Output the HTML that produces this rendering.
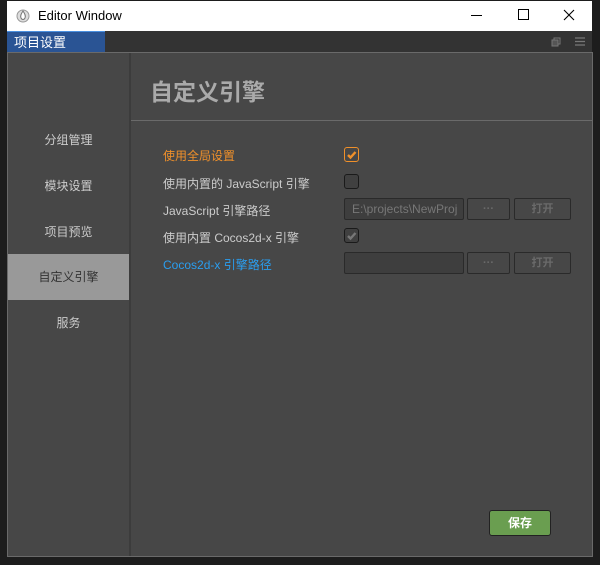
<!DOCTYPE html>
<html><head><meta charset="utf-8"><style>
*{margin:0;padding:0;box-sizing:border-box}
body{width:600px;height:565px;background:#1d1d1d;position:relative;overflow:hidden;font-family:"Liberation Sans","Noto Sans CJK SC",sans-serif;font-size:12px}
.abs{position:absolute}
.title{left:7px;top:1px;width:585px;height:30px;background:#fff}
.tabbar{left:7px;top:31px;width:585px;height:22px;background:#333}
.tab{left:7px;top:31px;width:98px;height:22px;background:#2a5494;border-top:1px solid #4a90e0;color:#fff;font-size:13px;line-height:22px;padding-left:7px}
.panel{left:7px;top:52px;width:586px;height:505px;background:#474747;border:1px solid #6a6a6a}
.side{left:8px;top:53px;width:121px;height:503px;background:#474747}
.sep{left:129px;top:53px;width:2px;height:503px;background:#3c3c3c}
.item{left:8px;width:121px;height:46px;line-height:46px;text-align:center;color:#ccc;font-size:12px}
.lbl{left:163px;font-size:12px;color:#ccc}
.cb{left:344px;width:15px;height:15px;border:1px solid #1a1a1a;border-radius:3px;background:#474747}
.inp{left:344px;width:120px;height:22px;background:#3e3e3e;border:1px solid #2a2a2a;border-radius:2px;color:#777;font-size:12px;line-height:20px;padding-left:7px;overflow:hidden;white-space:nowrap}
.btn{width:43px;height:22px;border:1px solid #2a2a2a;border-radius:2px;background:#474747;color:#6a6a6a;text-align:center;line-height:20px;font-weight:bold;font-size:11px}
</style></head><body>
<div class="abs title"></div>
<svg class="abs" style="left:16px;top:8px" width="14" height="15" viewBox="0 0 14 15"><circle cx="7" cy="8" r="6" fill="#ddd" stroke="#999"/><path d="M7 3 C5 6 4 8 5 10 C6 12 8 12 9 10 C10 8 9 6 7 3Z" fill="#fff" stroke="#777"/></svg>
<div class="abs" style="left:38px;top:8px;font-size:13px;color:#000;font-family:'Liberation Sans',sans-serif">Editor Window</div>
<div class="abs" style="left:471px;top:15px;width:11px;height:1px;background:#000"></div>
<div class="abs" style="left:518px;top:9px;width:11px;height:11px;border:1px solid #000"></div>
<svg class="abs" style="left:563px;top:9px" width="12" height="12"><path d="M1 1L11 11M11 1L1 11" stroke="#000" stroke-width="1.1"/></svg>
<div class="abs tabbar"></div>
<div class="abs tab">项目设置</div>
<svg class="abs" style="left:551px;top:37px" width="10" height="10"><rect x="3" y="1" width="6" height="6" fill="none" stroke="#777"/><rect x="1" y="3" width="6" height="6" fill="#555" stroke="#777"/></svg>
<svg class="abs" style="left:575px;top:37px" width="10" height="9"><path d="M0 1H10M0 4.5H10M0 8H10" stroke="#777" stroke-width="1.2"/></svg>
<div class="abs panel"></div>
<div class="abs side"></div>
<div class="abs sep"></div>
<div class="abs item" style="top:117px">分组管理</div>
<div class="abs item" style="top:163px">模块设置</div>
<div class="abs item" style="top:209px">项目预览</div>
<div class="abs item" style="top:254px;background:#999;color:#333">自定义引擎</div>
<div class="abs item" style="top:300px">服务</div>
<div class="abs" style="left:150px;top:73px;font-size:23px;font-weight:bold;color:#aaa">自定义引擎</div>
<div class="abs" style="left:131px;top:120px;width:461px;height:1px;background:#6a6a6a"></div>
<div class="abs lbl" style="top:147px;color:#f0902a">使用全局设置</div>
<div class="abs cb" style="top:147px;border-color:#f0902a"></div>
<svg class="abs" style="left:346px;top:149px" width="11" height="11"><path d="M2 6L4.5 8.5L9.5 3" stroke="#f0902a" stroke-width="2.4" fill="none"/></svg>
<div class="abs lbl" style="top:175px">使用内置的 JavaScript 引擎</div>
<div class="abs cb" style="top:174px;background:#404040"></div>
<div class="abs lbl" style="top:202px">JavaScript 引擎路径</div>
<div class="abs inp" style="top:198px">E:\projects\NewProj</div>
<div class="abs btn" style="left:467px;top:198px">···</div>
<div class="abs btn" style="left:514px;top:198px;width:57px">打开</div>
<div class="abs lbl" style="top:229px">使用内置 Cocos2d-x 引擎</div>
<div class="abs cb" style="top:228px;background:#404040"></div>
<svg class="abs" style="left:346px;top:230px" width="11" height="11"><path d="M2 6L4.5 8.5L9.5 3" stroke="#777" stroke-width="2.4" fill="none"/></svg>
<div class="abs lbl" style="top:256px;color:#2a9ef0">Cocos2d-x 引擎路径</div>
<div class="abs inp" style="top:252px"></div>
<div class="abs btn" style="left:467px;top:252px">···</div>
<div class="abs btn" style="left:514px;top:252px;width:57px">打开</div>
<div class="abs" style="left:489px;top:510px;width:62px;height:26px;background:#6a9e50;border:1px solid #222;border-radius:3px;color:#fff;font-weight:bold;text-align:center;line-height:24px;font-size:12px">保存</div>
</body></html>
